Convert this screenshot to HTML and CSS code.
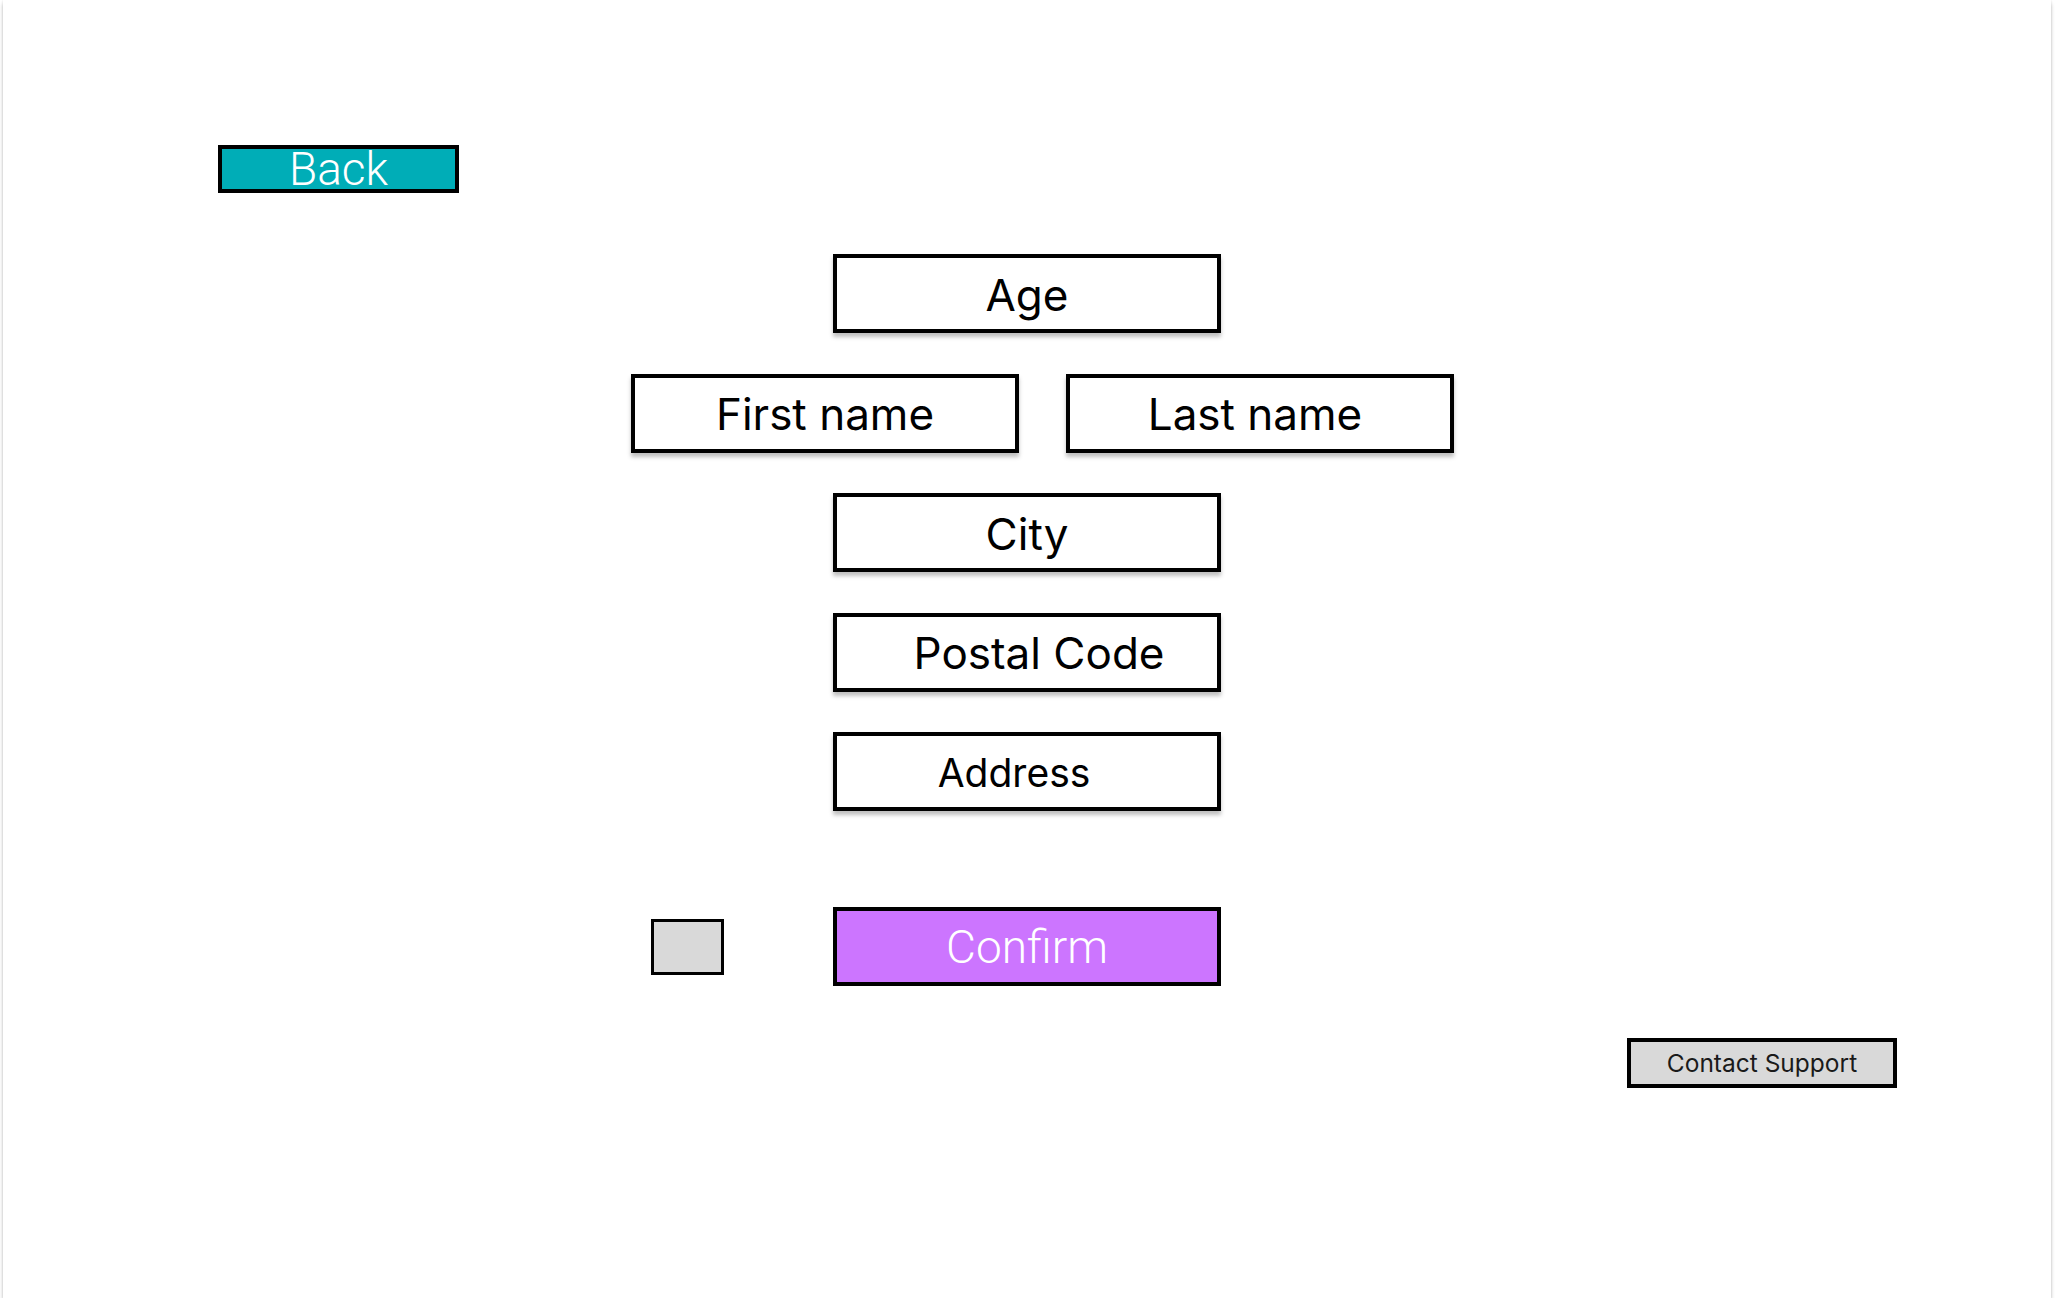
FILE: index.html
```html
<!DOCTYPE html>
<html lang="en">
<head>
<meta charset="utf-8">
<title>Form</title>
<link rel="stylesheet" href="styles.css">
</head>
<body>
<div class="frame">
  <button class="btn back">Back</button>
  <div class="stack">
    <div class="field">Age</div>
    <div class="pair">
      <div class="field">First name</div>
      <div class="field field-last">Last name</div>
    </div>
    <div class="field">City</div>
    <div class="field field-postal">Postal Code</div>
    <div class="field field-address">Address</div>
  </div>
  <div class="actions">
    <div class="checkbox"></div>
    <button class="btn confirm">Confirm</button>
  </div>
  <button class="support">Contact Support</button>
</div>
</body>
</html>
```
FILE: styles.css
```css
html, body {
  margin: 0;
  padding: 0;
  background: #ffffff;
}

.frame {
  margin-left: 3px;
  width: 2048px;
  height: 1298px;
  box-sizing: border-box;
  padding-top: 145px;
  background: #ffffff;
  box-shadow: 0 4px 4px rgba(0, 0, 0, 0.22), 0 0 2px rgba(0, 0, 0, 0.12);
  display: flex;
  flex-direction: column;
}

.btn {
  box-sizing: border-box;
  border: 4px solid #000000;
  color: #ffffff;
  font-family: Roboto, "Liberation Sans", sans-serif;
  font-weight: 300;
  font-size: 46px;
  line-height: 1;
  padding: 0;
  margin: 0;
  display: flex;
  align-items: center;
  justify-content: center;
}

.back {
  align-self: flex-start;
  margin-left: 215px;
  width: 241px;
  height: 48px;
  background: #00adb7;
}

.stack {
  margin-top: 61px;
  display: flex;
  flex-direction: column;
  align-items: center;
  gap: 40.5px;
}

.pair {
  display: flex;
  gap: 47px;
  padding-left: 31px;
}

.field {
  width: 388px;
  height: 79px;
  box-sizing: border-box;
  border: 4px solid #000000;
  background: #ffffff;
  box-shadow: 0 4px 4px rgba(0, 0, 0, 0.25);
  font-family: Inter, "Noto Sans", sans-serif;
  font-size: 44px;
  line-height: 1;
  color: #000000;
  display: flex;
  align-items: center;
  justify-content: center;
  padding-top: 2px;
}

.field-last {
  padding-right: 10px;
}

.field-postal {
  padding-left: 24px;
}

.field-address {
  font-size: 39px;
  padding-right: 26px;
}

.actions {
  margin-top: 96px;
  display: grid;
  grid-template-columns: 1fr auto 1fr;
  align-items: center;
}

.checkbox {
  justify-self: end;
  margin-right: 109px;
  width: 73px;
  height: 56px;
  box-sizing: border-box;
  border: 3px solid #000000;
  background: #d9d9d9;
}

.confirm {
  width: 388px;
  height: 79px;
  background: #cc75ff;
}

.support {
  align-self: flex-end;
  margin: 52px 154px 0 0;
  width: 270px;
  height: 50px;
  box-sizing: border-box;
  border: 4px solid #000000;
  background: #d9d9d9;
  color: #1a1a1a;
  font-family: Inter, "Noto Sans", sans-serif;
  font-size: 24.5px;
  line-height: 1;
  padding: 0;
  display: flex;
  align-items: center;
  justify-content: center;
}
```
